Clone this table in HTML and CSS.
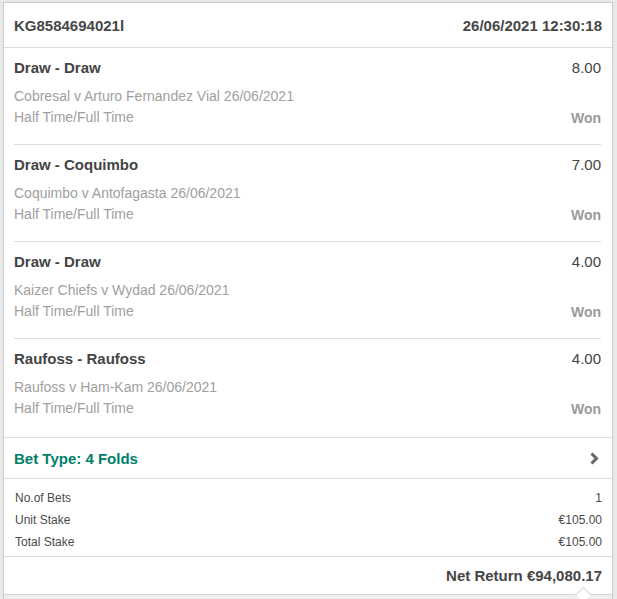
FILE: index.html
```html
<!DOCTYPE html>
<html lang="en">

<head>
  <meta charset="UTF-8">
  <meta name="viewport" content="width=device-width, initial-scale=1.0">
  <title>Bet Ticket</title>
  <link rel="stylesheet" href="styles.css">
</head>

<body>
  <div class="ticket">
    <div class="ticket-head">
      <span>KG8584694021l</span>
      <span>26/06/2021 12:30:18</span>
    </div>

    <div class="legs">
      <div class="leg">
        <div class="leg-row">
          <span class="leg-title">Draw - Draw</span>
          <span class="leg-odds">8.00</span>
        </div>
        <div class="leg-event">Cobresal v Arturo Fernandez Vial 26/06/2021</div>
        <div class="leg-row leg-info">
          <span>Half Time/Full Time</span>
          <span class="leg-status">Won</span>
        </div>
      </div>
      <div class="leg">
        <div class="leg-row">
          <span class="leg-title">Draw - Coquimbo</span>
          <span class="leg-odds">7.00</span>
        </div>
        <div class="leg-event">Coquimbo v Antofagasta 26/06/2021</div>
        <div class="leg-row leg-info">
          <span>Half Time/Full Time</span>
          <span class="leg-status">Won</span>
        </div>
      </div>
      <div class="leg">
        <div class="leg-row">
          <span class="leg-title">Draw - Draw</span>
          <span class="leg-odds">4.00</span>
        </div>
        <div class="leg-event">Kaizer Chiefs v Wydad 26/06/2021</div>
        <div class="leg-row leg-info">
          <span>Half Time/Full Time</span>
          <span class="leg-status">Won</span>
        </div>
      </div>
      <div class="leg">
        <div class="leg-row">
          <span class="leg-title">Raufoss - Raufoss</span>
          <span class="leg-odds">4.00</span>
        </div>
        <div class="leg-event">Raufoss v Ham-Kam 26/06/2021</div>
        <div class="leg-row leg-info">
          <span>Half Time/Full Time</span>
          <span class="leg-status">Won</span>
        </div>
      </div>
    </div>

    <div class="bet-type">
      <span>Bet Type: 4 Folds</span>
      <svg class="chevron" width="9" height="13" viewBox="0 0 9 13">
        <polyline points="1.5,1.5 6.5,6.5 1.5,11.5" fill="none" stroke="#666" stroke-width="3" />
      </svg>
    </div>

    <div class="summary">
      <div class="summary-row"><span>No.of Bets</span><span>1</span></div>
      <div class="summary-row"><span>Unit Stake</span><span>€105.00</span></div>
      <div class="summary-row"><span>Total Stake</span><span>€105.00</span></div>
    </div>

    <div class="net-return">Net Return €94,080.17</div>

    <div class="ticket-foot"></div>
  </div>
</body>

</html>
```

FILE: styles.css
```css
body {
  margin: 0;
  padding: 0;
  font-family: "Liberation Sans", Arial, sans-serif;
  background: #e9e9e9;
  color: #444;
}

.ticket {
  margin: 2px 4px 0 3px;
  border: 1px solid #c9c9c9;
  border-bottom: none;
  background: white;
}

.ticket-head {
  height: 44px;
  padding: 0 10px;
  display: flex;
  align-items: center;
  justify-content: space-between;
  font-size: 15px;
  font-weight: bold;
  color: #474747;
  border-bottom: 1px solid #dcdcdc;
}

.legs {
  border-bottom: 1px solid #dcdcdc;
}

.leg {
  margin: 0 11px 0 10px;
  padding: 10px 0 16px;
  border-bottom: 1px solid #dcdcdc;
}

.leg:last-child {
  border-bottom: none;
  padding-bottom: 18px;
}

.leg-row {
  display: flex;
  justify-content: space-between;
  align-items: baseline;
  line-height: 20px;
}

.leg-title {
  font-size: 15px;
  font-weight: bold;
  color: #444;
}

.leg-odds {
  font-size: 15px;
  color: #444;
}

.leg-event {
  margin-top: 8px;
  font-size: 14px;
  line-height: 21px;
  color: #a0a0a0;
}

.leg-info {
  font-size: 14px;
  line-height: 21px;
  color: #a0a0a0;
}

.leg-status {
  font-weight: bold;
  color: #9a9a9a;
  position: relative;
  top: 1px;
}

.bet-type {
  height: 40px;
  padding: 0 13px 0 10px;
  display: flex;
  align-items: center;
  justify-content: space-between;
  font-size: 15px;
  font-weight: bold;
  color: #00806a;
  border-bottom: 1px solid #dcdcdc;
}

.chevron {
  display: block;
}

.summary {
  padding: 8px 10px 3px 11px;
  font-size: 12px;
  color: #4a4a4a;
  border-bottom: 1px solid #dcdcdc;
}

.summary-row {
  display: flex;
  justify-content: space-between;
  line-height: 22px;
}

.net-return {
  height: 37px;
  line-height: 38px;
  padding: 0 10px;
  text-align: right;
  font-size: 15px;
  font-weight: bold;
  color: #454545;
}

.ticket-foot {
  position: relative;
  height: 12px;
  background: #efefef;
  border-top: 1px solid #d6d6d6;
}

.ticket-foot::before {
  content: "";
  position: absolute;
  top: -6px;
  right: 23px;
  width: 10px;
  height: 10px;
  background: white;
  border-top: 1px solid #d6d6d6;
  border-left: 1px solid #d6d6d6;
  transform: rotate(45deg);
}
```
